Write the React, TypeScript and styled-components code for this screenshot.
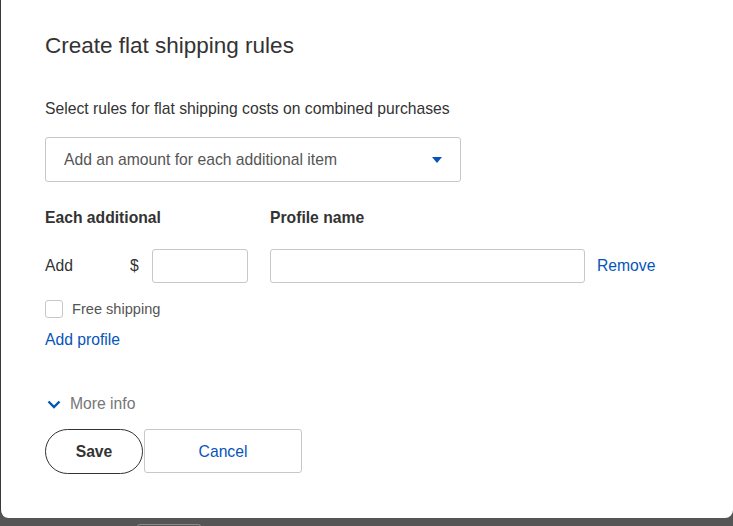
import React from "react";
import styled, { createGlobalStyle } from "styled-components";

const Global = createGlobalStyle`
  html, body { margin: 0; padding: 0; }
  body {
    background: #5a5a5a;
    font-family: "Liberation Sans", Arial, sans-serif;
    overflow: hidden;
  }
  * { box-sizing: border-box; }
`;

const Backdrop = styled.div`
  width: 733px;
  height: 526px;
  display: flex;
  flex-direction: column;
  background: linear-gradient(#5f5f5f, #555);
  overflow: hidden;
`;

const Modal = styled.div`
  flex: none;
  width: 733px;
  height: 518px;
  background: #fff;
  border-left: 1px solid #3a3a3a;
  border-radius: 0 0 8px 8px;
  padding: 33px 0 0 44px;
  display: flex;
  flex-direction: column;
  color: #333;
`;

const BehindButton = styled.div`
  flex: none;
  margin: 6px 0 0 137px;
  width: 64px;
  height: 6px;
  border: 1px solid #8a8a8a;
  border-bottom: none;
  border-radius: 3px 3px 0 0;
`;

const Title = styled.h2`
  margin: 0;
  font-size: 22.5px;
  font-weight: 400;
  line-height: 26px;
  color: #333;
`;

const Lead = styled.p`
  margin: 40px 0 0;
  font-size: 15.7px;
  line-height: 20px;
  color: #333;
`;

const Select = styled.div`
  margin-top: 18px;
  width: 416px;
  height: 45px;
  border: 1px solid #c7c7c7;
  border-radius: 3px;
  display: flex;
  align-items: center;
  justify-content: space-between;
  padding: 0 18px 0 18px;
  font-size: 15.7px;
  color: #555;
`;

const Caret = styled.span`
  width: 0;
  height: 0;
  border-left: 5px solid transparent;
  border-right: 5px solid transparent;
  border-top: 6px solid #0654ba;
`;

const HeaderRow = styled.div`
  margin-top: 26px;
  display: flex;
  font-size: 15.7px;
  font-weight: 700;
  line-height: 20px;
  color: #333;
`;

const HeaderCell = styled.div<{ $w?: number }>`
  width: ${(p) => (p.$w ? `${p.$w}px` : "auto")};
`;

const FieldRow = styled.div`
  margin-top: 21px;
  display: flex;
  align-items: center;
  height: 34px;
  font-size: 15.7px;
  color: #333;
`;

const Label = styled.span<{ $w: number }>`
  width: ${(p) => p.$w}px;
  flex: none;
`;

const Input = styled.input<{ $w: number }>`
  width: ${(p) => p.$w}px;
  height: 34px;
  border: 1px solid #c7c7c7;
  border-radius: 3px;
  background: #fff;
  font: inherit;
  padding: 0 8px;
  margin: 0;
  flex: none;
`;

const Gap = styled.span<{ $w: number }>`
  width: ${(p) => p.$w}px;
  flex: none;
`;

const LinkText = styled.a`
  color: #0654ba;
  font-size: 15.7px;
  text-decoration: none;
  cursor: pointer;
`;

const CheckRow = styled.label`
  margin-top: 17px;
  display: flex;
  align-items: center;
  gap: 9px;
  font-size: 14.6px;
  color: #555;
  height: 18px;
`;

const Box = styled.span`
  width: 18px;
  height: 18px;
  border: 1px solid #c7c7c7;
  border-radius: 3px;
  flex: none;
`;

const AddProfile = styled(LinkText)`
  margin-top: 12px;
  line-height: 20px;
  align-self: flex-start;
`;

const MoreInfo = styled.button`
  margin-top: 44px;
  align-self: flex-start;
  display: flex;
  align-items: center;
  gap: 9px;
  background: none;
  border: none;
  padding: 0 0 0 2px;
  font: inherit;
  font-size: 15.7px;
  line-height: 20px;
  color: #767676;
`;

const Actions = styled.div`
  margin-top: 15px;
  display: flex;
  align-items: flex-start;
  gap: 1px;
`;

const Button = styled.button<{ $primary?: boolean }>`
  height: ${(p) => (p.$primary ? 45 : 44)}px;
  width: ${(p) => (p.$primary ? 98 : 158)}px;
  border: 1px solid ${(p) => (p.$primary ? "#333" : "#c7c7c7")};
  border-radius: ${(p) => (p.$primary ? "23px" : "3px")};
  background: #fff;
  font-family: inherit;
  font-size: 15.7px;
  font-weight: ${(p) => (p.$primary ? 700 : 400)};
  color: ${(p) => (p.$primary ? "#333" : "#0654ba")};
  padding: ${(p) => (p.$primary ? "0" : "2px 0 0")};
`;

export default function App() {
  return (
    <>
      <Global />
      <Backdrop>
        <Modal>
          <Title>Create flat shipping rules</Title>
          <Lead>Select rules for flat shipping costs on combined purchases</Lead>
          <Select>
            <span>Add an amount for each additional item</span>
            <Caret />
          </Select>
          <HeaderRow>
            <HeaderCell $w={225}>Each additional</HeaderCell>
            <HeaderCell>Profile name</HeaderCell>
          </HeaderRow>
          <FieldRow>
            <Label $w={85}>Add</Label>
            <Label $w={22}>$</Label>
            <Input $w={96} />
            <Gap $w={22} />
            <Input $w={315} />
            <Gap $w={12} />
            <LinkText>Remove</LinkText>
          </FieldRow>
          <CheckRow>
            <Box />
            Free shipping
          </CheckRow>
          <AddProfile>Add profile</AddProfile>
          <MoreInfo>
            <svg width="14" height="9" viewBox="0 0 14 9">
              <path d="M1.5 1.5 L7 7 L12.5 1.5" fill="none" stroke="#0654ba" strokeWidth="2.4" />
            </svg>
            More info
          </MoreInfo>
          <Actions>
            <Button $primary>Save</Button>
            <Button>Cancel</Button>
          </Actions>
        </Modal>
        <BehindButton />
      </Backdrop>
    </>
  );
}
